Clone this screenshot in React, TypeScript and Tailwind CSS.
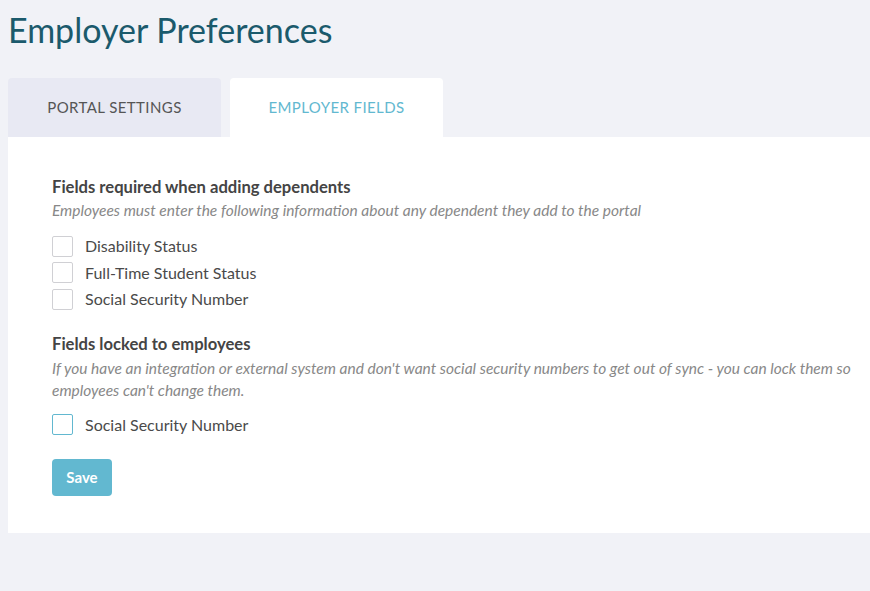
import React from "react";

function Box({ teal }: { teal?: boolean }) {
  return (
    <span
      className={
        "inline-block w-[21px] h-[21px] rounded-[2px] bg-white border shrink-0 " +
        (teal ? "border-[#62b8d0]" : "border-[#d0d0d4]")
      }
    />
  );
}

function Row({ label, teal }: { label: string; teal?: boolean }) {
  return (
    <label className="flex items-center gap-[12px] h-[26.5px]">
      <Box teal={teal} />
      <span className="text-[16px] text-[#4a4a4a]">{label}</span>
    </label>
  );
}

export default function App() {
  return (
    <div
      className="min-h-[591px] bg-[#f1f2f7] pl-[8px]"
      style={{ fontFamily: "Lato, 'Open Sans', sans-serif" }}
    >
      <h1 className="text-[34px] leading-[40px] text-[#1b5a6c] pt-[10px] h-[78px]">
        Employer Preferences
      </h1>
      <div className="flex gap-[9px]">
        <div className="w-[213px] h-[59px] rounded-t-[4px] bg-[#e8e9f3] flex items-center justify-center text-[15px] text-[#555] tracking-[0.4px]">
          PORTAL SETTINGS
        </div>
        <div className="w-[213px] h-[59px] rounded-t-[4px] bg-white flex items-center justify-center text-[15px] text-[#62b8d0] tracking-[0.4px]">
          EMPLOYER FIELDS
        </div>
      </div>
      <div className="bg-white h-[396px] pl-[44px] pt-[40px]">
        <h2 className="text-[16.6px] font-bold text-[#444] leading-[20px]">
          Fields required when adding dependents
        </h2>
        <p className="text-[15.5px] italic text-[#888] leading-[22px] mt-[2px]">
          Employees must enter the following information about any dependent they add to the portal
        </p>
        <div className="mt-[12px] flex flex-col">
          <Row label="Disability Status" />
          <Row label="Full-Time Student Status" />
          <Row label="Social Security Number" />
        </div>
        <h2 className="text-[16.6px] font-bold text-[#444] leading-[20px] mt-[21px]">
          Fields locked to employees
        </h2>
        <p className="text-[15.5px] italic text-[#888] leading-[22px] mt-[3px] pr-[16px]">
          If you have an integration or external system and don't want social security numbers to get out of sync - you can lock them so employees can't change them.
        </p>
        <div className="mt-[11px]">
          <Row label="Social Security Number" teal />
        </div>
        <button className="mt-[21px] w-[60px] h-[37px] rounded-[4px] bg-[#62b8d0] text-white font-bold text-[15px]">
          Save
        </button>
      </div>
    </div>
  );
}
